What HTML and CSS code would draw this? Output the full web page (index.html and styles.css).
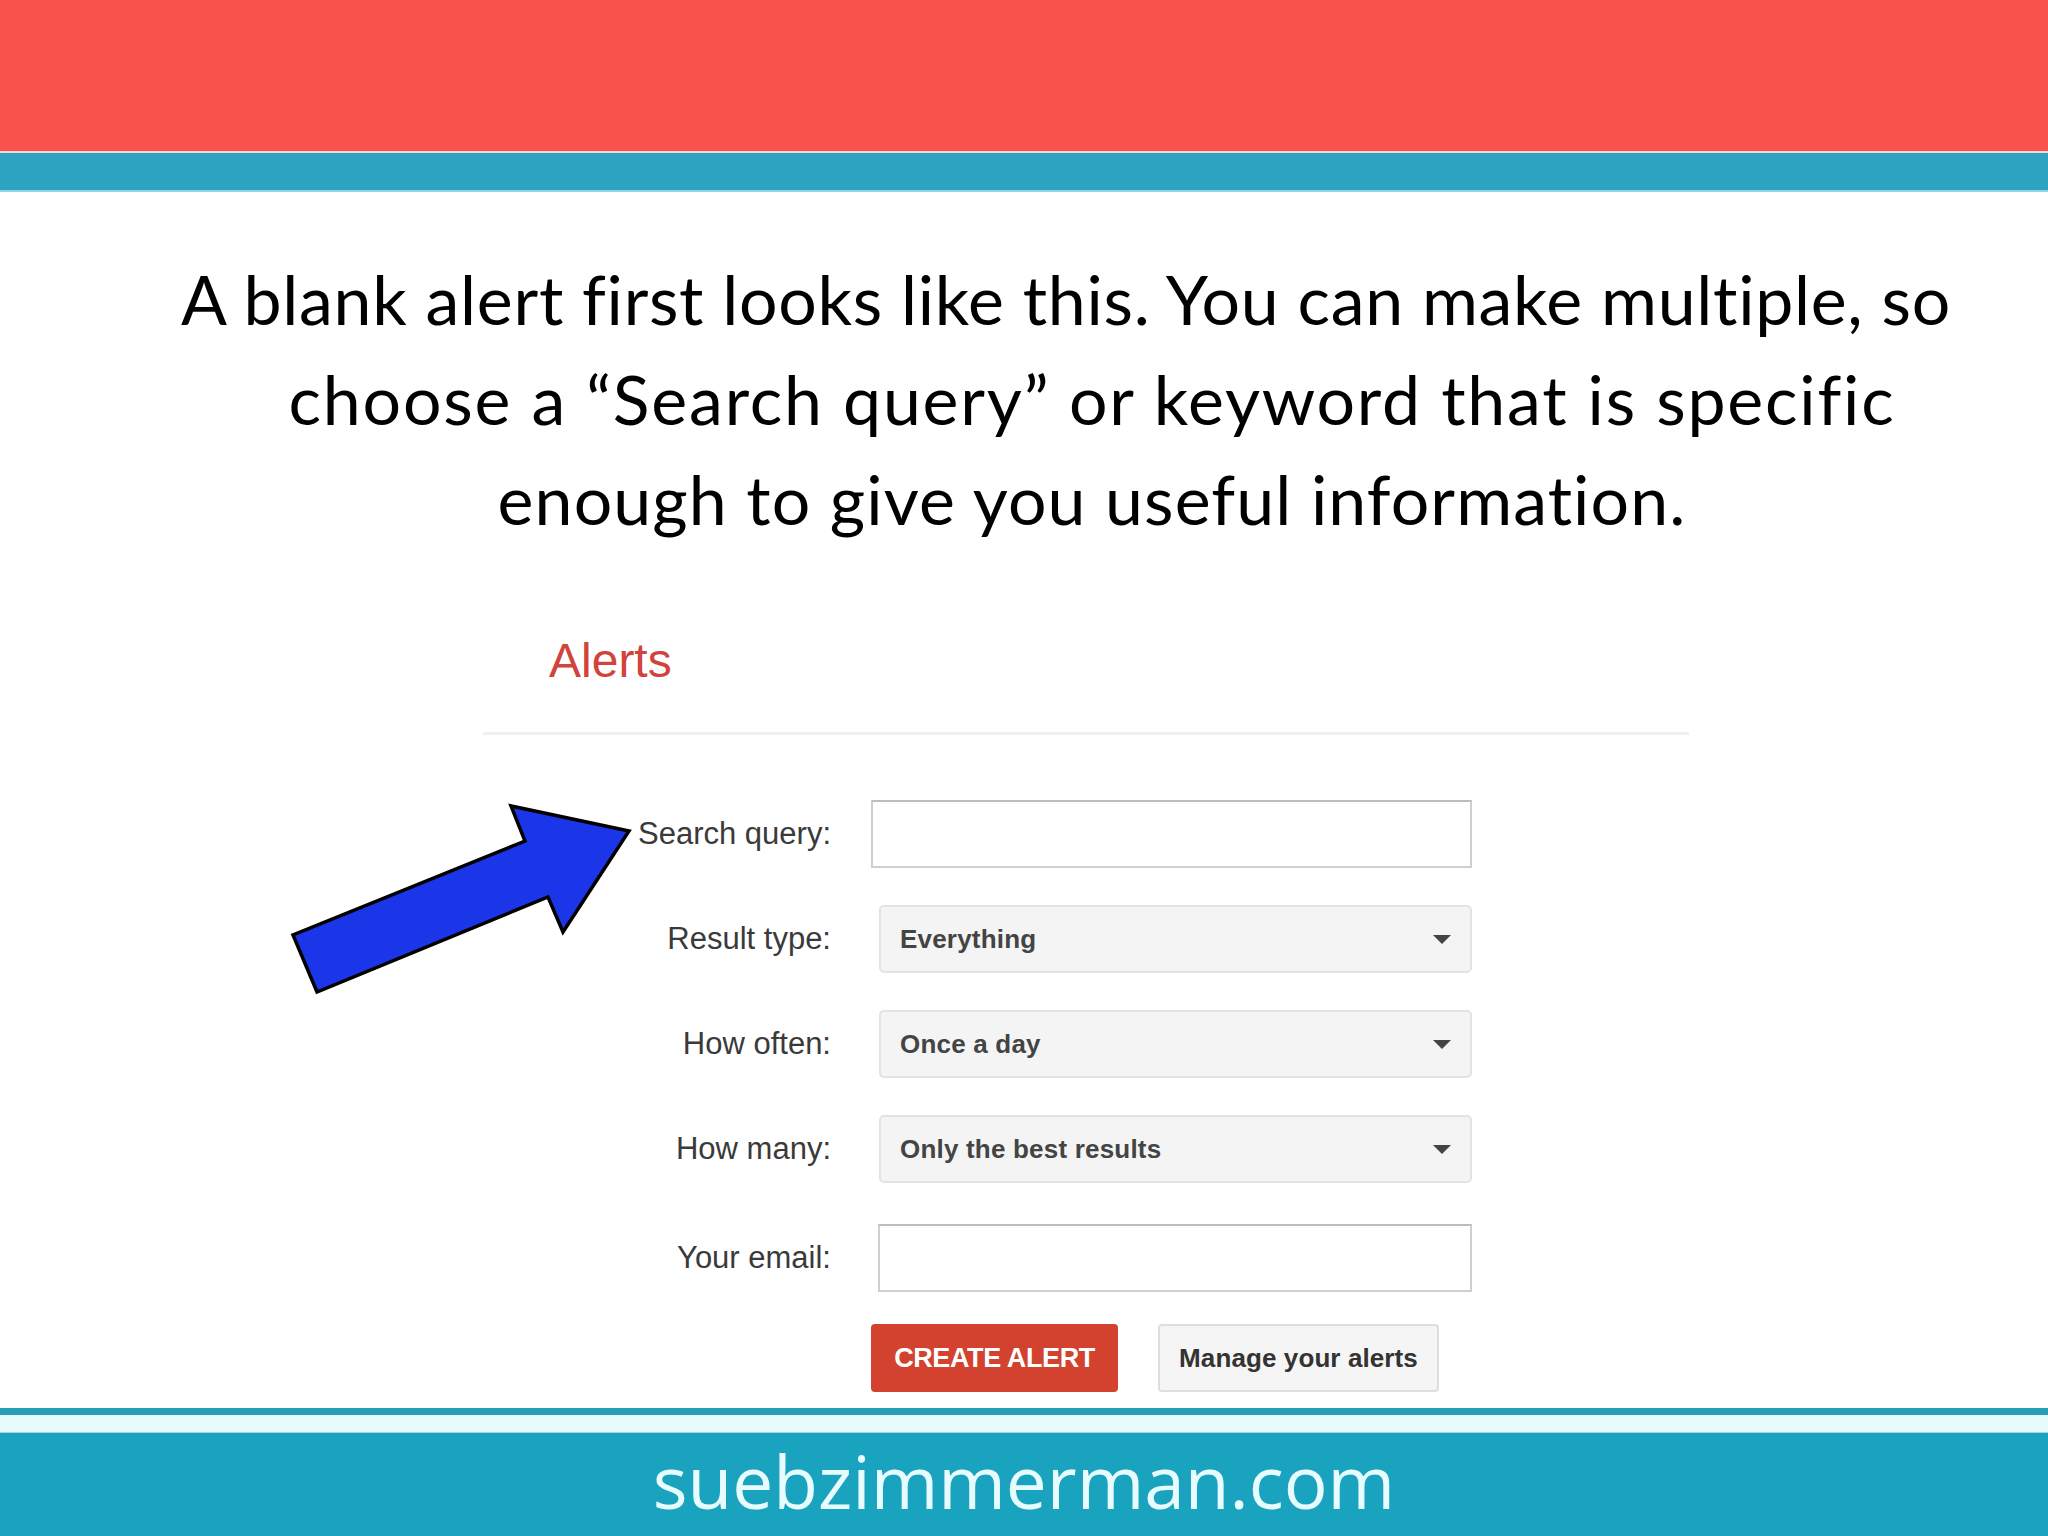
FILE: index.html
```html
<!DOCTYPE html>
<html lang="en">
<head>
<meta charset="utf-8">
<title>Alerts</title>
<link rel="stylesheet" href="styles.css">
</head>
<body>
<div class="slide">
  <header class="top">
    <div class="top-red"></div>
    <div class="top-gap"></div>
    <div class="top-teal"></div>
  </header>

  <main class="content">
    <p class="intro"><span class="l1">A blank alert first looks like this. You can make multiple, so</span><br><span class="l2">choose a “Search query” or keyword that is specific</span><br><span class="l3">enough to give you useful information.</span></p>

    <section class="alerts">
      <h1 class="alerts-title">Alerts</h1>
      <div class="form">
        <label class="lbl">Search query:</label>
        <div class="ctl"><div class="input"></div></div>

        <label class="lbl">Result type:</label>
        <div class="ctl"><div class="select"><span>Everything</span><i class="caret"></i></div></div>

        <label class="lbl">How often:</label>
        <div class="ctl"><div class="select"><span>Once a day</span><i class="caret"></i></div></div>

        <label class="lbl">How many:</label>
        <div class="ctl"><div class="select"><span>Only the best results</span><i class="caret"></i></div></div>

        <label class="lbl row-email">Your email:</label>
        <div class="ctl row-email"><div class="input email"></div></div>

        <div class="lbl row-btns"></div>
        <div class="ctl buttons row-btns">
          <div class="btn btn-red">CREATE ALERT</div>
          <div class="btn btn-gray">Manage your alerts</div>
        </div>
      </div>
    </section>

    <svg class="arrow" width="380" height="210" viewBox="0 0 380 210" xmlns="http://www.w3.org/2000/svg">
      <polygon points="349,41 231,16 245,51 13,145 37,202 268,107 283,142" fill="#1b36e8" stroke="#000" stroke-width="3.5" stroke-linejoin="miter"/>
    </svg>
  </main>

  <footer class="bottom">
    <div class="bottom-line"></div>
    <div class="bottom-light"></div>
    <div class="bottom-teal">suebzimmerman.com</div>
  </footer>
</div>
</body>
</html>
```

FILE: styles.css
```css
* { box-sizing: border-box; }
html, body { margin: 0; padding: 0; }
body { width: 2048px; height: 1536px; overflow: hidden; background: #fff; }

.slide {
  width: 2048px;
  height: 1536px;
  display: flex;
  flex-direction: column;
  background: #fff;
}

.top-red { height: 151px; background: #f9524c; }
.top-gap { height: 2px; background: #f6d6d3; }
.top-teal { height: 39px; background: #2ba3c1; border-bottom: 2px solid #8fd5e8; }

.content {
  position: relative;
  flex: 1;
}

.intro {
  margin: 57px 0 0 0;
  padding-left: 136px;
  font-family: "Lato", "DejaVu Sans", sans-serif;
  font-weight: 400;
  font-size: 68px;
  line-height: 100px;
  color: #000;
  text-align: center;
  text-indent: -52px;
}
.intro .l1 { letter-spacing: 0.7px; }
.intro .l2 { letter-spacing: 1.8px; }
.intro .l3 { letter-spacing: 1.1px; }

.alerts {
  margin: 84px 0 0 483px;
  width: 1206px;
  font-family: "Liberation Sans", Arial, sans-serif;
}

.alerts-title {
  margin: 0;
  padding: 0 0 43px 66px;
  font-size: 48px;
  line-height: 56px;
  font-weight: 400;
  color: #d1433b;
  border-bottom: 3px solid #efeff3;
}

.form {
  margin-top: 65px;
  display: grid;
  grid-template-columns: 348px 601px;
  column-gap: 40px;
  row-gap: 37px;
  align-items: center;
}

.lbl {
  text-align: right;
  font-size: 31px;
  color: #3a3a3a;
}

.ctl { height: 68px; display: flex; }

.row-email { margin-top: 4px; }
.row-btns { margin-top: -5px; }

.input {
  flex: 1;
  height: 68px;
  border: 2px solid #cfcfcf;
  border-top-color: #bdbdbd;
  background: #fff;
}
.input.email { margin-left: 7px; }

.select {
  flex: 1;
  margin-left: 8px;
  height: 68px;
  border: 2px solid #e3e3e3;
  border-radius: 5px;
  background: #f4f4f4;
  display: flex;
  align-items: center;
  justify-content: space-between;
  padding: 0 19px 0 19px;
  font-size: 26px;
  font-weight: 700;
  color: #444;
  letter-spacing: 0.2px;
}

.caret {
  width: 0;
  height: 0;
  border-left: 9px solid transparent;
  border-right: 9px solid transparent;
  border-top: 9px solid #444;
}

.buttons { gap: 40px; align-items: stretch; }

.btn {
  height: 68px;
  display: flex;
  align-items: center;
  justify-content: center;
  border-radius: 4px;
  font-weight: 700;
}
.btn-red {
  width: 247px;
  background: #d3412f;
  color: #fff;
  font-size: 27px;
  letter-spacing: -0.4px;
}
.btn-gray {
  width: 281px;
  background: #f5f5f5;
  border: 2px solid #dedede;
  color: #333;
  font-size: 26px;
  letter-spacing: 0.1px;
}

.arrow {
  position: absolute;
  left: 280px;
  top: 598px;
}

.bottom { height: 128px; display: flex; flex-direction: column; }
.bottom-line { height: 7px; background: #26a0b6; }
.bottom-light { height: 18px; background: #e7fbfc; border-bottom: 1px solid #9fdbe6; }
.bottom-teal {
  flex: 1;
  background: #19a3bf;
  color: #e6fcff;
  font-family: "Open Sans", "Noto Sans", sans-serif;
  font-size: 73px;
  line-height: 96px;
  text-align: center;
}
```
